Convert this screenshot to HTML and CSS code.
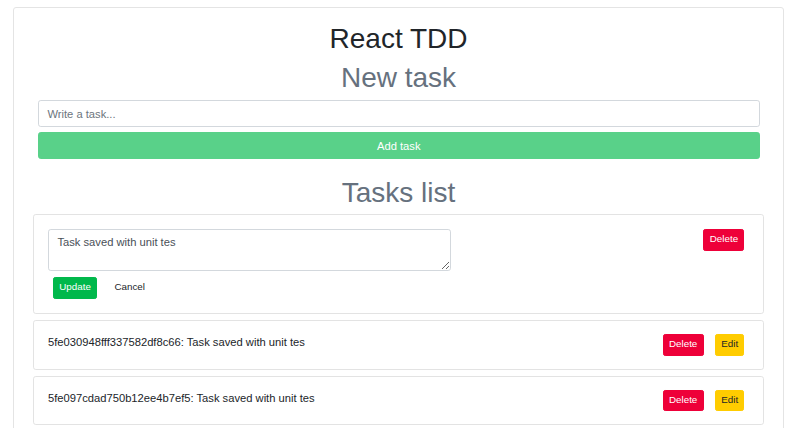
FILE: index.html
```html
<!DOCTYPE html>
<html lang="en">
<head>
<meta charset="utf-8">
<title>React TDD</title>
<link rel="stylesheet" href="styles.css">
</head>
<body>
<div class="app">
  <h1 class="title">React TDD</h1>
  <h2 class="subtitle">New task</h2>
  <form class="new-form">
    <input class="field" type="text" placeholder="Write a task...">
    <button class="btn-add" type="button">Add task</button>
  </form>
  <h2 class="subtitle list-title">Tasks list</h2>
  <ul class="tasks">
    <li class="card editing">
      <div class="edit-col">
        <textarea class="field area">Task saved with unit tes</textarea>
        <div class="edit-actions">
          <button class="btn btn-update" type="button">Update</button>
          <button class="btn btn-cancel" type="button">Cancel</button>
        </div>
      </div>
      <div class="actions">
        <button class="btn btn-delete" type="button">Delete</button>
      </div>
    </li>
    <li class="card">
      <span class="task-text">5fe030948fff337582df8c66: Task saved with unit tes</span>
      <div class="actions">
        <button class="btn btn-delete" type="button">Delete</button>
        <button class="btn btn-edit" type="button">Edit</button>
      </div>
    </li>
    <li class="card">
      <span class="task-text">5fe097cdad750b12ee4b7ef5: Task saved with unit tes</span>
      <div class="actions">
        <button class="btn btn-delete" type="button">Delete</button>
        <button class="btn btn-edit" type="button">Edit</button>
      </div>
    </li>
  </ul>
</div>
</body>
</html>
```

FILE: styles.css
```css
* { box-sizing: border-box; }

html, body {
  margin: 0;
  padding: 0;
  background: #fff;
}

body {
  font-family: "Liberation Sans", Arial, sans-serif;
  font-size: 11.2px;
  line-height: 1.5;
  color: #212529;
  overflow: hidden;
}

.app {
  margin: 7px 16px 0 13px;
  border: 1px solid #e4e4e4;
  border-radius: 3px;
  padding: 14px 19px 0 19px;
  min-height: 440px;
}

.title,
.subtitle {
  margin: 0 0 5.6px;
  font-size: 28px;
  line-height: 1.2;
  font-weight: 500;
  text-align: center;
}

.title { color: #212529; }

.subtitle { color: #66717e; }

.list-title { margin-bottom: 4.4px; }

.new-form {
  display: flex;
  flex-direction: column;
  gap: 5.4px;
  margin: 0 4.5px 17px 5px;
}

.field {
  display: block;
  width: 100%;
  height: 26.6px;
  padding: 0 8.4px;
  border: 1px solid #d3d8dd;
  border-radius: 2.8px;
  font-family: inherit;
  font-size: 11.2px;
  color: #495057;
  background: #fff;
}

.field::placeholder { color: #6c757d; }

.btn-add {
  display: block;
  width: 100%;
  height: 26.6px;
  border: 1px solid #59d189;
  border-radius: 2.8px;
  background: #59d189;
  color: #fff;
  font-family: inherit;
  font-size: 11.2px;
}

.tasks {
  list-style: none;
  margin: 0;
  padding: 0;
}

.card {
  display: flex;
  justify-content: space-between;
  align-items: flex-start;
  border: 1px solid #e3e3e3;
  border-radius: 2.8px;
  padding: 13px 14px;
  margin-bottom: 6.2px;
}

.card.editing { padding: 14px; }

.edit-col { display: flex; flex-direction: column; }

.area {
  width: 403px;
  height: 42px;
  padding: 4px 8.4px;
  resize: vertical;
  line-height: 1.5;
}

.edit-actions {
  display: flex;
  gap: 11px;
  margin: 6px 0 0 5px;
}

.actions {
  display: flex;
  gap: 11.3px;
  margin-right: 4.6px;
}

.btn {
  border: 1px solid transparent;
  border-radius: 2.2px;
  padding: 2.5px 5.3px;
  font-family: inherit;
  font-size: 9.8px;
  line-height: 14.7px;
  background: transparent;
  color: #212529;
}

.btn-update { background: #00b84b; border-color: #00b84b; color: #fff; }
.btn-cancel { color: #212529; }
.btn-delete { background: #ee0039; border-color: #ee0039; color: #fff; }
.btn-edit { background: #ffcc00; border-color: #ffcc00; color: #212529; }

.task-text {
  display: block;
  line-height: 16.8px;
}
```
